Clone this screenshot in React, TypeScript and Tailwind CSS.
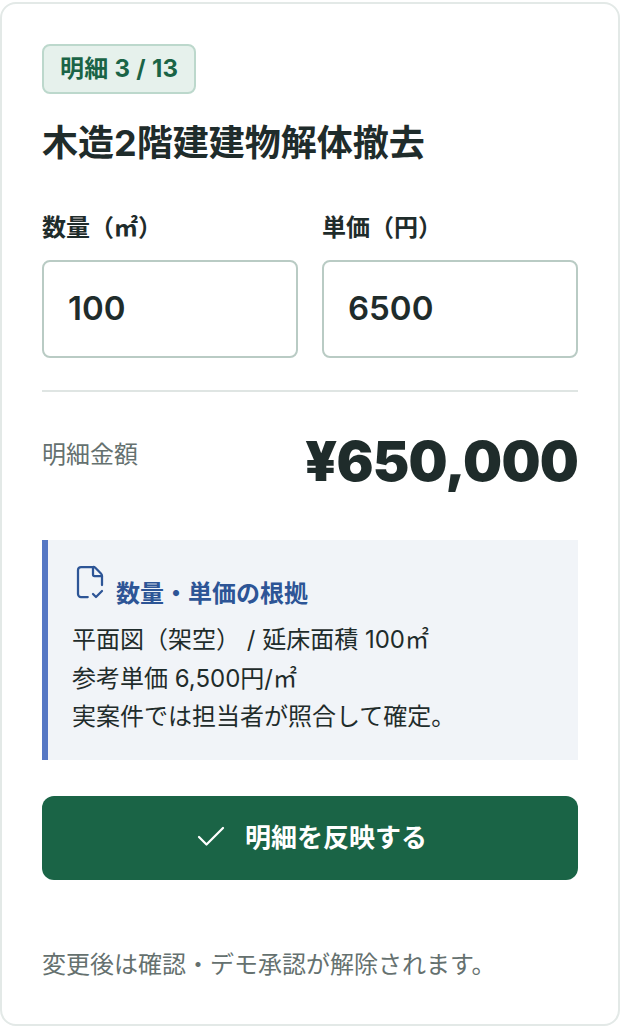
import { Check, FileCheckCorner } from "lucide-react";

const font = "font-['Inter','Noto_Sans_CJK_JP',sans-serif]";

function Field({ label, value }: { label: string; value: string }) {
  return (
    <label className="flex flex-col">
      <span className="text-[24px] leading-[36px] font-bold text-[#1f2c2b]">{label}</span>
      <input
        readOnly
        value={value}
        className="mt-[14px] h-[98px] w-full rounded-[8px] border-2 border-[#b9cbc4] bg-white px-[24px] pb-[2px] text-[33px] font-semibold text-[#1f2c2b] outline-none"
      />
    </label>
  );
}

export default function App() {
  return (
    <div className={`${font} bg-white py-[2px] h-[1028px]`}>
      <div className="h-[1024px] rounded-[16px] border-2 border-[#e3e9e7] bg-white px-[40px] pt-[40px]">
        <div className="inline-flex h-[50px] items-center rounded-[8px] border-2 border-[#bcd8cc] bg-[#e6f1ec] px-[16px] text-[24px] font-bold tracking-[0.3px] text-[#1a6446]">
          明細 3 / 13
        </div>
        <h1 className="mt-[22px] text-[36px] leading-[54px] font-bold text-[#1f2c2b]">木造2階建建物解体撤去</h1>
        <div className="mt-[40px] grid grid-cols-2 gap-[24px]">
          <Field label="数量（㎡）" value="100" />
          <Field label="単価（円）" value="6500" />
        </div>
        <div className="mt-[32px] h-[2px] bg-[#dfe5e3]" />
        <div className="mt-[35px] flex items-start justify-between">
          <span className="mt-[10px] text-[24px] leading-[36px] text-[#65716f]">明細金額</span>
          <span className="text-[55px] leading-[68px] font-black tracking-[-0.8px] text-[#1f2c2b]">¥650,000</span>
        </div>
        <div className="mt-[45px] h-[220px] border-l-[6px] border-[#5577c4] bg-[#f1f4f8] pl-[24px] pt-[24px]">
          <div className="flex items-end gap-[8px] text-[24px] leading-[36px] font-bold text-[#2d5596]">
            <FileCheckCorner size={36} strokeWidth={1.5} />
            <span className="translate-y-[12px]">数量・単価の根拠</span>
          </div>
          <div className="mt-[21px] text-[24px] leading-[38.5px] text-[#1f2c2b]">
            <p>平面図（架空） / 延床面積 100㎡</p>
            <p>参考単価 6,500円/㎡</p>
            <p>実案件では担当者が照合して確定。</p>
          </div>
        </div>
        <button className="mt-[36px] flex h-[84px] w-full items-center justify-center gap-[16px] rounded-[12px] bg-[#1a6446] pb-[2px] text-[26px] font-bold text-white">
          <Check size={36} strokeWidth={1.5} />
          明細を反映する
        </button>
        <p className="mt-[67px] text-[24px] leading-[36px] text-[#65716f]">変更後は確認・デモ承認が解除されます。</p>
      </div>
    </div>
  );
}
